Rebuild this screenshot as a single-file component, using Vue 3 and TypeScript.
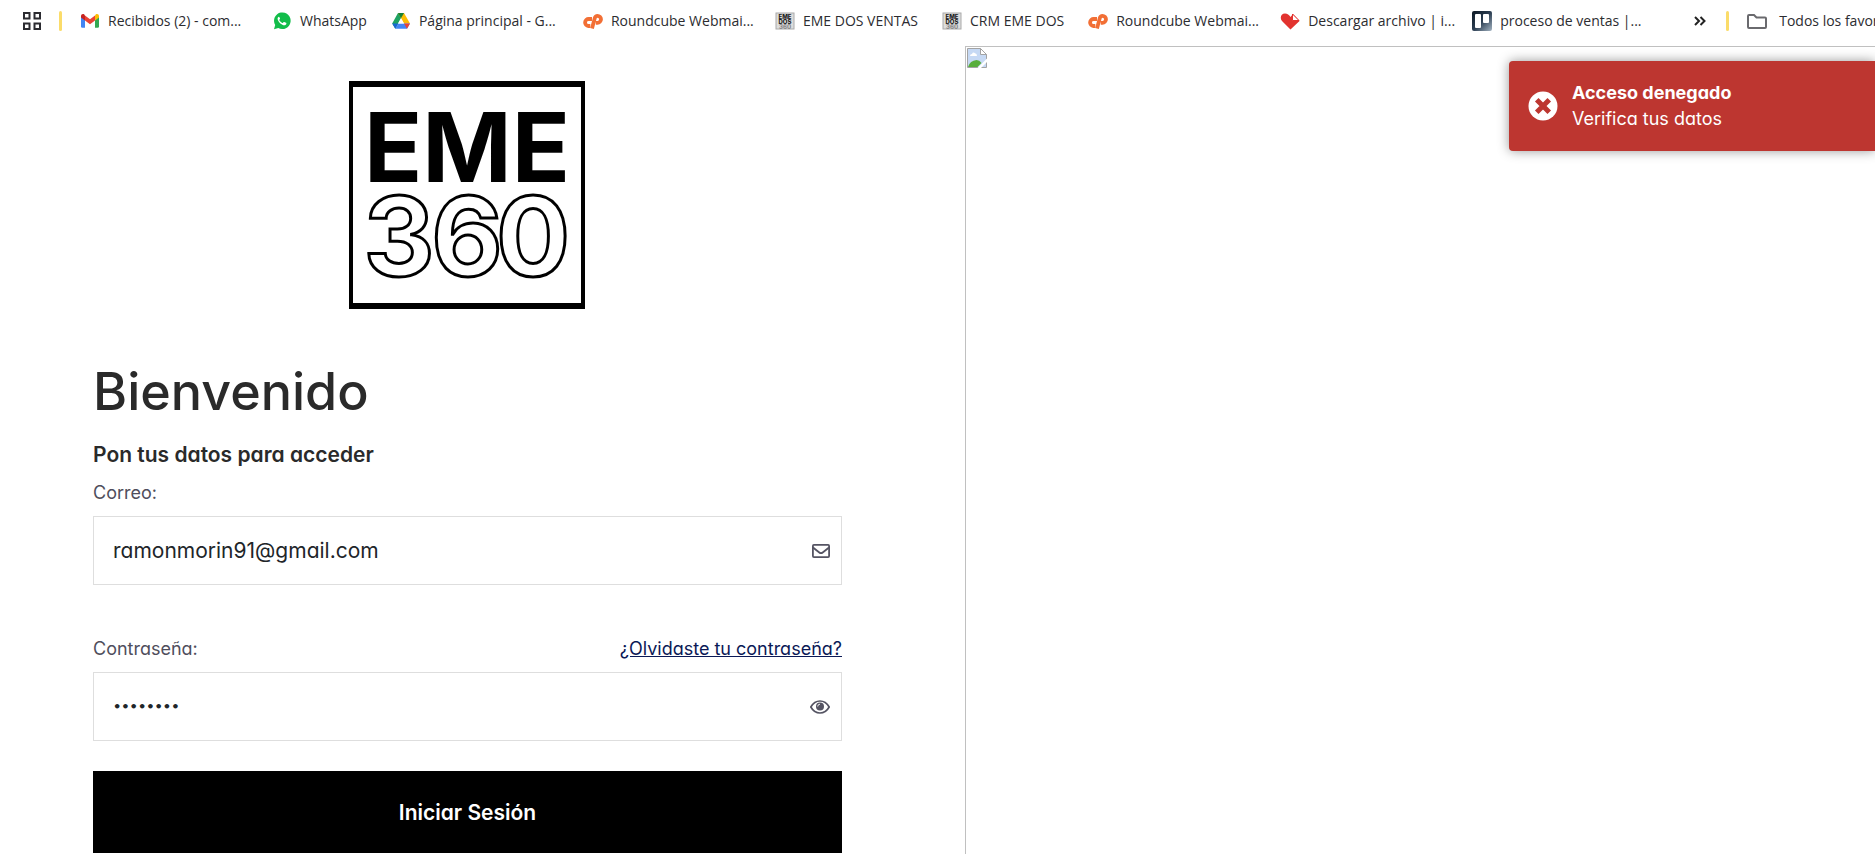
<script setup lang="ts">
import { ref } from 'vue'

type IconName = 'gmail' | 'whatsapp' | 'drive' | 'cpanel' | 'eme' | 'heart' | 'trello'

interface Bookmark {
  icon: IconName
  label: string
  wide: boolean
}

const bookmarks: Bookmark[] = [
  { icon: 'gmail', label: 'Recibidos (2) - com...', wide: true },
  { icon: 'whatsapp', label: 'WhatsApp', wide: false },
  { icon: 'drive', label: 'Página principal - G...', wide: true },
  { icon: 'cpanel', label: 'Roundcube Webmai...', wide: true },
  { icon: 'eme', label: 'EME DOS VENTAS', wide: false },
  { icon: 'eme', label: 'CRM EME DOS', wide: false },
  { icon: 'cpanel', label: 'Roundcube Webmai...', wide: true },
  { icon: 'heart', label: 'Descargar archivo | i...', wide: true },
  { icon: 'trello', label: 'proceso de ventas |...', wide: true },
]

const email = ref('ramonmorin91@gmail.com')
const password = ref('12345678')
const visible = ref(false)
</script>

<template>
  <div class="page">
    <nav class="bookmarks" aria-label="Favoritos">
      <button class="apps" type="button" aria-label="Aplicaciones">
        <svg width="18" height="18" viewBox="0 0 18 18" fill="none" stroke="#2b2b30" stroke-width="2">
          <path d="M1 1h5.500v5.500h-5.500zM11.500 1h5.500v5.500h-5.500zM1 11.500h5.500v5.500h-5.500zM11.500 11.500h5.500v5.500h-5.500z" />
        </svg>
      </button>
      <span class="bar"></span>
      <a v-for="(b, i) in bookmarks" :key="i" href="#" class="bookmark" :class="{ wide: b.wide }">
        <svg v-if="b.icon === 'gmail'" class="icon" viewBox="0 0 20 20">
          <path d="M1 5v10.500q0 1.300 1.300 1.300H5V9z" fill="#4285f4" />
          <path d="M19 5v10.500q0 1.300-1.300 1.300H15V9z" fill="#34a853" />
          <path d="M15 4.500v5L19 6.500V5c0-2-2-2.600-3.300-1.600z" fill="#fbbc04" />
          <path d="M5 9.500v-5l5 3.800 5-3.800v5l-5 3.800z" fill="#ea4335" />
          <path d="M1 5v1.500l4 3v-5L4.300 3.400C3 2.400 1 3 1 5z" fill="#c5221f" />
        </svg>
        <svg v-else-if="b.icon === 'whatsapp'" class="icon" viewBox="0 0 20 20">
          <path d="M2 18.300l1.200-4.300A8.300 8.300 0 1 1 6.300 17z" fill="#12bd4a" />
          <path d="M6.900 5.700c-1.300.4-1.600 2-1 3.400 1 2.400 3 4.300 5.400 5.100 1.500.5 3-.2 3.100-1.600.1-.5 0-.6-.4-.8l-1.700-.8c-.4-.2-.6 0-.8.300-.6.800-.7.900-1.300.6-1.300-.6-2.200-1.500-2.900-2.700-.2-.4 0-.5.6-1.300.2-.3.100-.5 0-.8l-.7-1.200c-.1-.2-.1-.2-.3-.2z" fill="#fff" />
        </svg>
        <svg v-else-if="b.icon === 'drive'" class="icon" viewBox="0 0 20 20">
          <path d="M7 2h6l-3 5.200-5.700 10.600L1.200 12.500z" fill="#1ea362" />
          <path d="M7 2h6l6 10.500h-6z" fill="#fbbc04" />
          <path d="M4.300 17.800l3-5.300H19l-3 5.300z" fill="#4285f4" />
          <path d="M13 12.500h6l-3 5.300z" fill="#ea4335" />
          <path d="M7 2h6l-3 5.200z" fill="#188038" />
          <path d="M1.200 12.500h6l-2.900 5.300z" fill="#1967d2" />
          <path d="M10 7.300l3 5.200H7z" fill="#fff" />
        </svg>
        <svg v-else-if="b.icon === 'cpanel'" class="icon" viewBox="0 0 20 20" fill="none" stroke="#f26f35" stroke-width="3.800">
          <path d="M9 8H5.800a3.500 3.500 0 0 0-.4 7H7.300" />
          <path d="M9 17.500l2.800-10.400q.6-2.300 2.700-2.300a3.500 3.500 0 0 1 0 7H12.800" />
        </svg>
        <svg v-else-if="b.icon === 'eme'" class="icon" viewBox="0 0 20 20">
          <rect x="1" y="2" width="18" height="16" fill="#ddd" stroke="#aaa" stroke-width="1" />
          <text x="10" y="7.500" class="mini">EME</text>
          <text x="10" y="12.500" class="mini">DOS</text>
          <text x="10" y="17.500" class="mini faint">360</text>
        </svg>
        <svg v-else-if="b.icon === 'heart'" class="icon" viewBox="0 0 20 20">
          <path d="M10.500 18.500L2 10C-.5 7 1 2.500 5 2.500c2.500 0 4 1.300 5.500 3.500L13 3l6.500 7z" fill="#e2332f" />
          <path d="M12.500 3l6.500 6.500h-6.500z" fill="#fff" stroke="#e2332f" stroke-width="1" />
        </svg>
        <svg v-else class="icon" viewBox="0 0 20 20">
          <defs>
            <linearGradient id="board" x1="0" y1="0" x2="1" y2="1">
              <stop offset="0" stop-color="#0c1822" />
              <stop offset="0.500" stop-color="#2c3e52" />
              <stop offset="1" stop-color="#a4b4c2" />
            </linearGradient>
          </defs>
          <rect width="20" height="20" rx="2" fill="url(#board)" />
          <rect x="3" y="3" width="6" height="14" rx="1" fill="#fff" />
          <rect x="11" y="3" width="6" height="9" rx="1" fill="#fff" />
        </svg>
        <span class="label">{{ b.label }}</span>
      </a>
      <button class="more" type="button" aria-label="Más favoritos">
        <svg width="14" height="10" viewBox="0 0 14 10" fill="none" stroke="#222" stroke-width="2">
          <path d="M1 1l4 4-4 4M6.500 1l4 4-4 4" />
        </svg>
      </button>
      <span class="bar"></span>
      <a href="#" class="bookmark folder">
        <svg class="icon" viewBox="0 0 20 20" fill="none" stroke="#6a6a6e" stroke-width="2">
          <path d="M1 16V5q0-1 1-1h5l2.500 2.500H18q1 0 1 1V16q0 1-1 1H2q-1 0-1-1z" />
        </svg>
        <span class="label">Todos los favoritos</span>
      </a>
    </nav>

    <div class="columns">
      <main class="login">
        <svg class="logo" width="237" height="228" viewBox="0 0 237 228" role="img" aria-label="EME 360">
          <path d="M0 0h236v228h-236zM4 6v216h228v-216z" fill="#000" fill-rule="evenodd" />
          <text x="118" y="101" class="logo-solid">EME</text>
          <text x="50 118 184" y="195" class="logo-outline">360</text>
        </svg>

        <h1>Bienvenido</h1>
        <h2>Pon tus datos para acceder</h2>

        <form @submit.prevent>
          <div class="row">
            <label for="email">Correo:</label>
          </div>
          <div class="field">
            <input id="email" v-model="email" type="email" />
            <svg width="18" height="14" viewBox="0 0 18 14" fill="none" stroke="#555463" stroke-width="1.800">
              <rect x="0.900" y="0.900" width="16.200" height="12.200" rx="1" />
              <path d="M1 3.500l6.300 5q1.700 1.300 3.400 0l6.300-5" />
            </svg>
          </div>

          <div class="row second">
            <label for="password">Contraseña:</label>
            <a href="#" class="forgot">¿Olvidaste tu contraseña?</a>
          </div>
          <div class="field">
            <input id="password" v-model="password" :type="visible ? 'text' : 'password'" />
            <button class="eye" type="button" aria-label="Mostrar contraseña" @click="visible = !visible">
              <svg width="20" height="14" viewBox="0 0 20 14">
                <path d="M.8 7Q4.200 1 10 1t9.200 6Q15.800 13 10 13T.8 7z" fill="none" stroke="#555463" stroke-width="1.700" />
                <circle cx="10" cy="6.500" r="4" fill="#555463" />
                <path d="M7.700 6.500Q7.700 4.200 10 4.200" fill="none" stroke="#fff" stroke-width="0.900" />
              </svg>
            </button>
          </div>

          <button class="submit" type="submit">Iniciar Sesión</button>
        </form>
      </main>

      <aside class="cover" aria-label="Imagen no disponible">
        <svg width="20" height="20" viewBox="0 0 20 20">
          <path d="M.5 .5h13l6 6v13H.5z" fill="#c6d9f4" stroke="#a3a3a3" />
          <path d="M3 8q0-2 2-2 1-2.500 3-.8 2 .2 2 2.800z" fill="#fff" />
          <path d="M1 19q2-6.500 8.500-7 3 0 5 3l-4 4z" fill="#58ae3c" />
          <path d="M13.500 .5v6h6z" fill="#fff" stroke="#a3a3a3" />
          <path d="M10.500 20L20 10.500V14l-6 6z" fill="#fff" />
        </svg>
      </aside>
    </div>

    <div class="toast" role="alert">
      <svg width="30" height="30" viewBox="0 0 30 30">
        <circle cx="15" cy="15" r="14.500" fill="#fff" />
        <path d="M10.500 10.500l9 9M19.500 10.500l-9 9" stroke="#bd3630" stroke-width="5" stroke-linecap="square" />
      </svg>
      <div>
        <strong>Acceso denegado</strong>
        <p>Verifica tus datos</p>
      </div>
    </div>
  </div>
</template>

<style>
body {
  margin: 0;
  background: #fff;
}
</style>

<style scoped>
.page {
  position: relative;
  display: flex;
  flex-direction: column;
  min-height: 100vh;
  overflow: hidden;
  font-family: Inter, "Open Sans", sans-serif;
  font-feature-settings: "cv11";
  color: #2a2a2a;
}

button {
  font: inherit;
  border: 0;
  padding: 0;
  background: none;
  cursor: pointer;
}

/* Bookmarks bar */
.bookmarks {
  display: flex;
  align-items: center;
  height: 41px;
  padding: 0 0 5px 23px;
  font-family: "Open Sans", "Noto Sans", sans-serif;
  font-size: 14px;
  line-height: 20px;
}

.bookmarks > * {
  flex: none;
}

.apps,
.more {
  display: flex;
}

.bar {
  width: 3px;
  height: 20px;
  margin: 0 18px;
  border-radius: 2px;
  background: #fbdc6a;
}

.bookmark {
  display: flex;
  align-items: center;
  gap: 8px;
  box-sizing: border-box;
  padding-right: 24px;
  color: #2c2c30;
  text-decoration: none;
  white-space: nowrap;
}

.bookmark.wide {
  width: 192px;
}

.icon {
  flex: none;
  width: 20px;
  height: 20px;
}

.mini {
  font: 800 6px Inter, sans-serif;
  text-anchor: middle;
  fill: #222;
}

.mini.faint {
  fill: #888;
}

.more {
  margin-left: 30px;
}

.folder {
  gap: 12px;
}

/* Page */
.columns {
  display: flex;
  flex: 1;
}

.login {
  box-sizing: border-box;
  width: 965px;
  max-width: 51.500%;
  flex: none;
  padding: 35px 123px 0 93px;
}

.logo {
  display: block;
  margin: 0 auto;
}

.logo-solid,
.logo-outline {
  font-family: Inter, sans-serif;
  text-anchor: middle;
}

.logo-solid {
  font-size: 96px;
  font-weight: 700;
}

.logo-outline {
  font-size: 110px;
  font-weight: 700;
  fill: #fff;
  stroke: #000;
  stroke-width: 3px;
}

h1 {
  margin: 51px 0 15px;
  font-size: 52px;
  font-weight: 500;
  line-height: 64px;
}

h2 {
  margin: 0 0 8px;
  font-size: 21px;
  font-weight: 600;
  line-height: 32px;
}

.row {
  display: flex;
  justify-content: space-between;
  margin-bottom: 9px;
  font-size: 18px;
  line-height: 28px;
  color: #4f4e5c;
}

.row.second {
  margin-top: 50px;
}

.forgot {
  color: #0b1956;
  text-decoration: underline;
}

.field {
  display: flex;
  align-items: center;
  height: 67px;
  padding: 0 11px 0 19px;
  border: 1px solid #dedede;
}

.field input {
  flex: 1;
  min-width: 0;
  padding: 0;
  border: 0;
  outline: 0;
  background: none;
  font: inherit;
  font-size: 21px;
  line-height: 32px;
  color: #212529;
}

.field input[type="password"] {
  font-family: "DejaVu Sans", sans-serif;
  font-size: 13px;
  font-weight: 700;
}

.eye {
  display: flex;
}

.submit {
  display: block;
  width: 100%;
  height: 82px;
  margin-top: 30px;
  background: #000;
  color: #fff;
  font-size: 21px;
  font-weight: 600;
}

.cover {
  flex: 1;
  padding: 1px;
  border: 1px solid #c0c0c0;
  border-width: 1px 0 0 1px;
}

/* Notification laid over the page */
.toast {
  position: absolute;
  top: 61px;
  right: 0;
  display: flex;
  align-items: center;
  gap: 14px;
  box-sizing: border-box;
  width: 366px;
  height: 90px;
  padding: 0 19px;
  border-radius: 4px 0 0 4px;
  background: #bd3630;
  box-shadow: 0 0 12px #999;
  color: #fff;
  font-size: 18px;
  line-height: 26px;
}

.toast strong {
  font-weight: 700;
}

.toast p {
  margin: 0;
}
</style>
